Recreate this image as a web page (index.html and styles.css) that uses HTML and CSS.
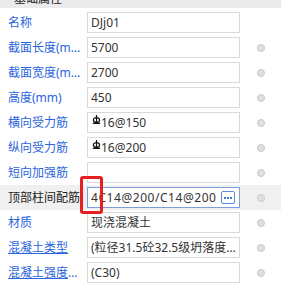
FILE: index.html
```html
<!DOCTYPE html>
<html lang="zh">
<head>
<meta charset="utf-8">
<title>基础属性</title>
<link rel="stylesheet" href="styles.css">
</head>
<body>
<div class="panel">
  <div class="header"><span>基础属性</span></div>
  <div class="rows">
    <div class="row">
      <div class="label">名称</div>
      <div class="input"><span class="text">DJj01</span></div>
      <div class="dot-cell"></div>
    </div>
    <div class="row">
      <div class="label">截面长度(mm)</div>
      <div class="input"><span class="text">5700</span></div>
      <div class="dot-cell"><span class="dot"></span></div>
    </div>
    <div class="row">
      <div class="label">截面宽度(mm)</div>
      <div class="input"><span class="text">2700</span></div>
      <div class="dot-cell"><span class="dot"></span></div>
    </div>
    <div class="row">
      <div class="label">高度(mm)</div>
      <div class="input"><span class="text">450</span></div>
      <div class="dot-cell"><span class="dot"></span></div>
    </div>
    <div class="row">
      <div class="label">横向受力筋</div>
      <div class="input"><svg class="bar" width="9" height="9" viewBox="0 0 9 9"><path d="M4.5 0V8.5M0.8 8.4H8.2M4.5 2.6C2.5 2.6 1.4 3.7 1.4 5.1S2.5 7.4 4.5 7.4 7.6 6.5 7.6 5.1 6.5 2.6 4.5 2.6Z" fill="none" stroke="#111" stroke-width="1.2"/></svg><span class="text">16@150</span></div>
      <div class="dot-cell"><span class="dot"></span></div>
    </div>
    <div class="row">
      <div class="label">纵向受力筋</div>
      <div class="input"><svg class="bar" width="9" height="9" viewBox="0 0 9 9"><path d="M4.5 0V8.5M0.8 8.4H8.2M4.5 2.6C2.5 2.6 1.4 3.7 1.4 5.1S2.5 7.4 4.5 7.4 7.6 6.5 7.6 5.1 6.5 2.6 4.5 2.6Z" fill="none" stroke="#111" stroke-width="1.2"/></svg><span class="text">16@200</span></div>
      <div class="dot-cell"><span class="dot"></span></div>
    </div>
    <div class="row">
      <div class="label">短向加强筋</div>
      <div class="input"><span class="text"></span></div>
      <div class="dot-cell"><span class="dot"></span></div>
    </div>
    <div class="row selected">
      <div class="label">顶部柱间配筋</div>
      <div class="input active"><span class="text">4C14@200/C14@200</span><span class="more"><i></i><i></i><i></i></span></div>
      <div class="dot-cell"><span class="dot"></span></div>
    </div>
    <div class="row">
      <div class="label">材质</div>
      <div class="input"><span class="text">现浇混凝土</span></div>
      <div class="dot-cell"><span class="dot"></span></div>
    </div>
    <div class="row">
      <div class="label link">混凝土类型</div>
      <div class="input"><span class="text">(粒径31.5砼32.5级坍落度35~50mm)</span></div>
      <div class="dot-cell"><span class="dot"></span></div>
    </div>
    <div class="row">
      <div class="label link">混凝土强度等级</div>
      <div class="input"><span class="text">(C30)</span></div>
      <div class="dot-cell"><span class="dot"></span></div>
    </div>
  </div>
  <div class="marker"></div>
</div>
</body>
</html>
```

FILE: styles.css
```css
* { box-sizing: border-box; }
body {
  margin: 0;
  background: #fff;
  font-family: "Noto Sans", "Noto Sans CJK SC", sans-serif;
  font-size: 12px;
}
.panel {
  position: relative;
  width: 281px;
  height: 286px;
  overflow: hidden;
}
.header {
  height: 8px;
  background: #ebebeb;
  overflow: hidden;
  padding-left: 14px;
}
.header span {
  display: block;
  line-height: 14px;
  margin-top: -8px;
  color: #222;
}
.rows { padding-top: 2px; }
.row {
  display: grid;
  grid-template-columns: 87px 153px 41px;
  height: 25px;
  align-items: center;
}
.row.selected { background: #f0f0f0; }
.label {
  padding-left: 8px;
  padding-right: 4px;
  color: #2a64dc;
  white-space: nowrap;
  overflow: hidden;
  text-overflow: ellipsis;
  line-height: 16px;
}
.label.link { text-decoration: underline; }
.selected .label { color: #222; }
.input {
  height: 21px;
  border: 1px solid #d9d9d9;
  background: #fff;
  padding: 0 1px 0 3px;
  display: flex;
  align-items: center;
  color: #333;
  white-space: nowrap;
  overflow: hidden;
}
.input .text {
  overflow: hidden;
  text-overflow: ellipsis;
  line-height: 16px;
}
.input.active {
  border-color: #7c9edc;
  padding-right: 4px;
}
.input.active .text { letter-spacing: 0.55px; }
.bar {
  align-self: flex-start;
  margin: 2px 0 0 1px;
  flex: none;
}
.more {
  margin-left: auto;
  flex: none;
  width: 14px;
  height: 13px;
  border: 1px solid #5b8ad8;
  border-radius: 2px;
  background: #fff;
  display: flex;
  align-items: center;
  justify-content: center;
  gap: 1px;
}
.more i {
  width: 2px;
  height: 2px;
  background: #3b78d8;
}
.dot-cell {
  display: flex;
  align-items: center;
  padding-left: 17px;
}
.dot {
  width: 8px;
  height: 8px;
  border-radius: 50%;
  background: #e0e0e0;
  border: 1px solid #c8c8c8;
}
.marker {
  position: absolute;
  left: 80px;
  top: 176px;
  width: 23px;
  height: 38px;
  border: 3px solid #e62020;
  border-radius: 3px;
}
```
